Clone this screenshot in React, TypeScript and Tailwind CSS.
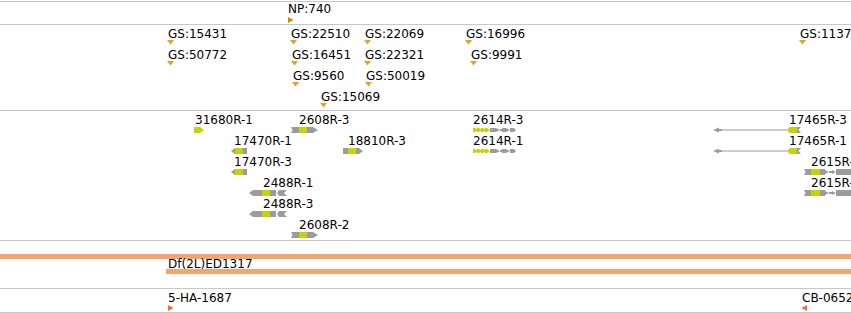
import React from "react";

const YEL = "#c6d300";
const GRY = "#9c9c9c";

type GeneKind = "fwd" | "rev" | "short" | "long" | "chev" | "span" | "multi" | "tiny";

type Feature = { x: number; text: string; dx?: number; kind?: GeneKind };

// each track is a stack of 21px rows; within a row a feature sits at its genome coordinate
const gsRows: Feature[][] = [
    [
        { x: 168, text: "GS:15431" },
        { x: 291, text: "GS:22510" },
        { x: 365, text: "GS:22069" },
        { x: 466, text: "GS:16996" },
        { x: 800, text: "GS:11372" },
    ],
    [
        { x: 168, text: "GS:50772" },
        { x: 292, text: "GS:16451" },
        { x: 365, text: "GS:22321" },
        { x: 471, text: "GS:9991" },
    ],
    [
        { x: 293, text: "GS:9560" },
        { x: 366, text: "GS:50019" },
    ],
    [{ x: 321, text: "GS:15069" }],
];

const geneRows: Feature[][] = [
    [
        { x: 195, dx: -1, text: "31680R-1", kind: "tiny" },
        { x: 299, dx: -8, text: "2608R-3", kind: "fwd" },
        { x: 473, dx: 0, text: "2614R-3", kind: "chev" },
        { x: 789, dx: -76, text: "17465R-3", kind: "span" },
    ],
    [
        { x: 234, dx: -3, text: "17470R-1", kind: "rev" },
        { x: 348, dx: -5, text: "18810R-3", kind: "short" },
        { x: 473, dx: 0, text: "2614R-1", kind: "chev" },
        { x: 789, dx: -76, text: "17465R-1", kind: "span" },
    ],
    [
        { x: 234, dx: -3, text: "17470R-3", kind: "rev" },
        { x: 811, dx: -7, text: "2615R-1", kind: "multi" },
    ],
    [
        { x: 263, dx: -14, text: "2488R-1", kind: "long" },
        { x: 811, dx: -7, text: "2615R-3", kind: "multi" },
    ],
    [{ x: 263, dx: -14, text: "2488R-3", kind: "long" }],
    [{ x: 299, dx: -8, text: "2608R-2", kind: "fwd" }],
];

function Glyph({ kind }: { kind: GeneKind }) {
    switch (kind) {
        case "tiny":
            return (
                <svg width="11" height="6">
                    <polygon points="0,0 6,0 10,3 6,6 0,6" fill={YEL} />
                </svg>
            );
        case "fwd":
            return (
                <svg width="27" height="6">
                    <polygon points="0,0 8,0 8,6 0,6 1.5,3" fill={GRY} />
                    <rect x="8" y="0" width="8" height="6" fill={YEL} />
                    <polygon points="16,0 22,0 27,3 22,6 16,6" fill={GRY} />
                </svg>
            );
        case "rev":
            return (
                <svg width="16" height="6">
                    <polygon points="0,3 4,0 4,6" fill={GRY} />
                    <rect x="4" y="0" width="8" height="6" fill={YEL} />
                    <rect x="12" y="0" width="4" height="6" fill={GRY} />
                </svg>
            );
        case "short":
            return (
                <svg width="20" height="6">
                    <rect x="0" y="0" width="5" height="6" fill={GRY} />
                    <rect x="5" y="0" width="8" height="6" fill={YEL} />
                    <polygon points="13,0 16,0 20,3 16,6 13,6" fill={GRY} />
                </svg>
            );
        case "long":
            return (
                <svg width="38" height="6">
                    <polygon points="0,3 4,0 13,0 13,6 4,6" fill={GRY} />
                    <rect x="13" y="0" width="8" height="6" fill={YEL} />
                    <rect x="21" y="0" width="6" height="6" fill={GRY} />
                    <polygon points="28,3 30,0 38,0 35,3 38,6 30,6" fill={GRY} />
                </svg>
            );
        case "chev":
            return (
                <svg width="43" height="6">
                    {[0, 4, 8, 12].map((i) => (
                        <polygon key={i} points={`${i},1 ${i + 2},1 ${i + 5},3 ${i + 2},5 ${i},5`} fill={YEL} />
                    ))}
                    <rect x="17" y="1" width="6" height="4" fill={GRY} />
                    <polygon points="23,1 27,3 23,5" fill={GRY} />
                    <rect x="27" y="2" width="2" height="2" fill={GRY} />
                    <rect x="29" y="1" width="4" height="4" fill={GRY} />
                    <polygon points="33,1 37,3 33,5" fill={GRY} />
                    <rect x="37" y="1" width="4" height="4" fill={GRY} />
                    <polygon points="41,1 43,3 41,5" fill={GRY} />
                </svg>
            );
        case "span":
            return (
                <svg width="88" height="6">
                    <polygon points="0,3 6,0.5 6,5.5" fill={GRY} />
                    <rect x="6" y="2" width="3" height="2" fill={GRY} />
                    <rect x="9" y="2.5" width="67" height="1" fill={GRY} />
                    <path d="M78,0 H84 V6 H78 A3,3 0 0 1 78,0 Z" fill={YEL} />
                    <polygon points="84,0 88,0 85.5,3 88,6 84,6" fill={GRY} />
                </svg>
            );
        case "multi":
            return (
                <svg width="47" height="6">
                    <polygon points="0,0 7,0 7,6 0,6 1.5,3" fill={GRY} />
                    <rect x="7" y="0" width="9" height="6" fill={YEL} />
                    <rect x="16" y="0" width="5" height="6" fill={GRY} />
                    <polygon points="21,1 25,3 21,5" fill={GRY} />
                    <rect x="25" y="2" width="3" height="2" fill={GRY} />
                    <polygon points="28,1 32,3 28,5" fill={GRY} />
                    <rect x="32" y="0" width="15" height="6" fill={GRY} />
                </svg>
            );
    }
}

function Label({ children }: { children: React.ReactNode }) {
    return <span className="block text-[12px] leading-none h-[12px] whitespace-nowrap text-black">{children}</span>;
}

function Track({ className, children }: { className: string; children: React.ReactNode }) {
    return <div className={`relative flex flex-col border-t border-[#c8c8c8] ${className}`}>{children}</div>;
}

export default function App() {
    return (
        <div
            className="w-[851px] h-[313px] overflow-hidden bg-white pt-px"
            style={{ fontFamily: '"DejaVu Sans", sans-serif' }}
        >
            {/* NP track */}
            <Track className="h-[23px] pt-px pl-[288px]">
                <div className="flex flex-col items-start gap-[2px]">
                    <Label>NP:740</Label>
                    <svg width="6" height="6">
                        <polygon points="0,0 5.5,3 0,6" fill="#d08a0c" />
                    </svg>
                </div>
            </Track>

            {/* GS track */}
            <Track className="h-[86px] pt-[3px]">
                {gsRows.map((row, i) => (
                    <div key={i} className="relative h-[21px] shrink-0">
                        {row.map((f) => (
                            <div key={f.text} className="absolute top-0 flex flex-col items-start" style={{ left: f.x }}>
                                <Label>{f.text}</Label>
                                <svg className="-ml-px" width="7" height="5">
                                    <polygon points="0,0 7,0 3.5,4.5" fill="#e8a020" />
                                </svg>
                            </div>
                        ))}
                    </div>
                ))}
            </Track>

            {/* gene models */}
            <Track className="h-[130px] pt-[3px]">
                {geneRows.map((row, i) => (
                    <div key={i} className="relative h-[21px] shrink-0">
                        {row.map((f) => (
                            <div key={f.text} className="absolute top-0 flex flex-col items-start gap-px" style={{ left: f.x }}>
                                <Label>{f.text}</Label>
                                <div className="flex" style={{ marginLeft: f.dx }}>
                                    <Glyph kind={f.kind!} />
                                </div>
                            </div>
                        ))}
                    </div>
                ))}
            </Track>

            {/* deficiencies */}
            <Track className="h-[48px] pt-[13px]">
                <div className="h-[5px] shrink-0 bg-[#f4a46e]" />
                <div className="flex pl-[168px] h-[11px] shrink-0 -mt-px">
                    <Label>Df(2L)ED1317</Label>
                </div>
                <div className="ml-[166px] h-[5px] shrink-0 bg-[#f4a46e]" />
            </Track>

            {/* insertions */}
            <Track className="h-[25px] pt-[3px] border-b box-border">
                <div className="flex justify-between pl-[168px]">
                    <div className="flex flex-col items-start gap-px">
                        <Label>5-HA-1687</Label>
                        <svg width="6" height="6">
                            <polygon points="0,0 5.5,3 0,6" fill="#f26a45" />
                        </svg>
                    </div>
                    <div className="flex flex-col items-start gap-px w-[49px]">
                        <Label>CB-0652</Label>
                        <svg className="-ml-px" width="6" height="6">
                            <polygon points="6,0 0.5,3 6,6" fill="#f26a45" />
                        </svg>
                    </div>
                </div>
            </Track>
        </div>
    );
}
